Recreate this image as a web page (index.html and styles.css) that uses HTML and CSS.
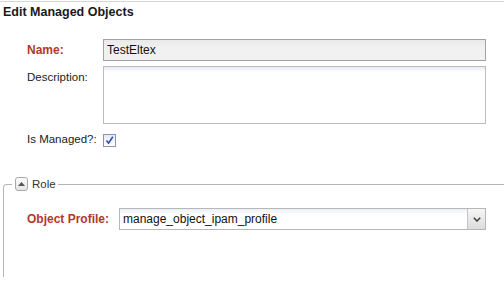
FILE: index.html
```html
<!DOCTYPE html>
<html lang="en">
<head>
  <meta charset="UTF-8">
  <meta name="viewport" content="width=device-width, initial-scale=1">
  <title>Edit Managed Objects</title>
  <link rel="stylesheet" href="styles.css">
</head>
<body>
  <div class="panel">
    <h1 class="panel-title">Edit Managed Objects</h1>

    <!-- Main fields -->
    <div class="form-rows">
      <div class="form-row">
        <label class="required" for="name">Name:</label>
        <input type="text" id="name" class="text-field" value="TestEltex">
      </div>
      <div class="form-row top">
        <label for="description">Description:</label>
        <textarea id="description" class="text-area"></textarea>
      </div>
      <div class="form-row check-row">
        <label>Is Managed?:</label>
        <span class="check-box">
          <svg width="11" height="11" viewBox="0 0 11 11"><path d="M2.5 5.5 L4.6 8.2 L8.8 1.8" fill="none" stroke="#2f4fa8" stroke-width="1.6"/></svg>
        </span>
      </div>
    </div>

    <!-- Role section -->
    <fieldset class="section">
      <legend>
        <span class="collapse-btn">
          <svg width="7" height="4" viewBox="0 0 7 4"><path d="M0 4 L3.5 0 L7 4 Z" fill="#555"/></svg>
        </span>
        <span>Role</span>
      </legend>
      <div class="form-row wide">
        <label class="required">Object Profile:</label>
        <div class="combo">
          <span class="combo-value">manage_object_ipam_profile</span>
          <span class="combo-arrow">
            <svg width="8" height="5" viewBox="0 0 8 5"><path d="M0.8 0.8 L4 4 L7.2 0.8" fill="none" stroke="#444" stroke-width="1.6"/></svg>
          </span>
        </div>
      </div>
    </fieldset>
  </div>
</body>
</html>
```

FILE: styles.css
```css
/* Base */
* { box-sizing: border-box; }
html, body { margin: 0; padding: 0; }
body {
  font-family: 'Liberation Sans', Arial, sans-serif;
  font-size: 11.5px;
  color: #222;
  background: #fff;
  overflow: hidden;
  height: 282px;
}
.panel {
  margin-top: 1px;
  border-top: 1px solid #d6d6d6;
  padding-top: 3px;
}
.panel-title {
  margin: 0 0 0 3px;
  font-size: 12.5px;
  line-height: 15px;
  font-weight: bold;
  color: #1a1a1a;
}
/* Form rows */
.form-rows {
  margin-top: 19px;
  display: flex;
  flex-direction: column;
  gap: 5px;
}
.form-row {
  display: grid;
  grid-template-columns: 76px 383px;
  align-items: center;
  margin-left: 27px;
  line-height: 14px;
}
.form-row.top { align-items: start; }
.form-row.top label { padding-top: 4px; }
.form-row.check-row { margin-top: 2px; }
.form-row.wide { grid-template-columns: 92px 367px; }
.form-row label.required {
  color: #b0392c;
  font-weight: bold;
  font-size: 12px;
}
.text-field {
  height: 22px;
  border: 1px solid #a3a3a3;
  background: linear-gradient(#e9e9e9, #f1f1f1 40%, #f1f1f1);
  padding: 0 3px;
  font-family: inherit;
  font-size: 12px;
  color: #111;
  outline: none;
}
.text-area {
  height: 58px;
  border: 1px solid #bcbcbc;
  background: linear-gradient(#e7e9f2, #fff 5px);
  resize: none;
  outline: none;
  margin: 0;
  display: block;
}
.check-box {
  width: 13px;
  height: 13px;
  margin-top: 3px;
  border: 1px solid #8a95b0;
  background: linear-gradient(#e6e9f1, #fff);
  display: flex;
  align-items: center;
  justify-content: center;
}
/* Collapsible section */
.section {
  margin: 30px 0 0 3px;
  padding: 0 0 0 8px;
  border: 1px solid #b5b5b5;
  border-right: none;
  border-bottom: none;
  border-top-left-radius: 4px;
  min-height: 100px;
}
.section legend {
  display: flex;
  align-items: center;
  gap: 4px;
  padding: 0 2px 0 3px;
  line-height: 14px;
  color: #333;
}
.collapse-btn {
  width: 13px;
  height: 14px;
  border: 1px solid #a9a9a9;
  border-radius: 3px;
  background: linear-gradient(#fdfdfd, #e4e4e4);
  display: flex;
  align-items: center;
  justify-content: center;
}
.section .form-row { margin-left: 15px; margin-top: 17px; }
/* Combo box */
.combo {
  display: flex;
  height: 22px;
  border: 1px solid #b7b7b7;
  background: linear-gradient(#eef0f6, #fff 6px);
}
.combo-value {
  flex: 1;
  padding: 0 3px;
  font-size: 12px;
  line-height: 20px;
  color: #111;
}
.combo-arrow {
  width: 18px;
  border-left: 1px solid #c4c4c4;
  background: linear-gradient(#f6f6f6, #dcdcdc);
  display: flex;
  align-items: center;
  justify-content: center;
}
```
